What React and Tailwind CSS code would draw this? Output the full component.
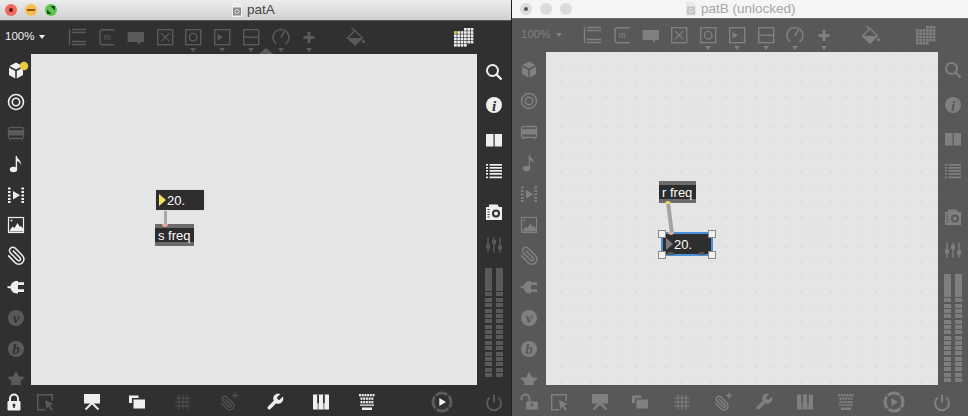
const rows = [0, 1, 2, 3, 4, 5]

function Svg({ children }) {
  return <svg width="20" height="20" viewBox="0 0 20 20" className="block shrink-0 overflow-visible">{children}</svg>
}

// toolbar icons
const ObjectIcon = () => (
  <Svg><path d="M2.5 2v16M5 2.5h14M5 5.5h14M5 14.5h14M5 17.5h14" fill="none" stroke="currentColor" strokeWidth="1.4" /></Svg>
)
const MessageIcon = () => (
  <Svg>
    <path d="M17.5 2.7H5a2 2 0 0 0-2 2v11a2 2 0 0 0 2 2h12.5" fill="none" stroke="currentColor" strokeWidth="1.4" />
    <text x="6.5" y="13" fontSize="10" fontStyle="italic" fontFamily="Liberation Serif, serif" fill="currentColor">m</text>
  </Svg>
)
const CommentIcon = () => (
  <Svg><path d="M2.6 5h16.4v10h-4v3l-3-3H2.6z" fill="currentColor" /></Svg>
)
const Boxed = ({ children }) => (
  <Svg>
    <rect x="2.7" y="2.7" width="15" height="15" fill="none" stroke="currentColor" strokeWidth="1.4" />
    {children}
  </Svg>
)
const ButtonIcon = () => (
  <Boxed><path d="M6 6l8.4 8.4M14.4 6L6 14.4" stroke="currentColor" strokeWidth="1.2" /></Boxed>
)
const ToggleIcon = () => (
  <Boxed><circle cx="10.2" cy="10.2" r="3.8" fill="none" stroke="currentColor" strokeWidth="1.4" /></Boxed>
)
const NumberIcon = () => (
  <Boxed><path d="M5.5 7l5.5 3.2-5.5 3.2z" fill="currentColor" /></Boxed>
)
const SliderIcon = () => (
  <Boxed><path d="M2.7 10.2h15" stroke="currentColor" strokeWidth="1.4" /></Boxed>
)
const DialIcon = () => (
  <Svg>
    <path d="M5.5 17a8 8 0 1 1 9 0" fill="none" stroke="currentColor" strokeWidth="1.5" />
    <path d="M10 10.5l3.5-6" stroke="currentColor" strokeWidth="1.5" />
  </Svg>
)
const PlusIcon = () => (
  <Svg><path d="M4.5 10.5h11M10 5v11" stroke="currentColor" strokeWidth="3" /></Svg>
)
const BucketIcon = () => (
  <Svg>
    <path d="M10 3.5l7.5 7.5L10 18 2.500 11z" fill="none" stroke="currentColor" strokeWidth="1.4" />
    <path d="M2.5 11h15L10 18z" fill="currentColor" />
    <path d="M6.5 1l3.5 3" stroke="currentColor" strokeWidth="1.4" />
    <circle cx="18.5" cy="14.5" r="1.6" fill="currentColor" />
  </Svg>
)
const MatrixIcon = ({ accent }) => (
  <Svg>
    {rows.map(r => rows.map(c => {
      if (r === 0 && c < 3) return null
      if (r === 5 && c > 3) return null
      const hot = accent && r === 1 && c === 0
      return <rect key={`${r}-${c}`} x={1 + c * 3.33} y={1 + r * 3.2} width="2.7" height="2.6" fill={hot ? accent : 'currentColor'} />
    }))}
  </Svg>
)

// side bar icons
const CubeIcon = ({ badge }) => (
  <Svg>
    <path d="M10 1.5l6.5 3.5L10 8.5 3.5 5z" fill="currentColor" />
    <path d="M3 6.5L9.2 10v7.5L3 14zM17 6.5L10.8 10v7.5L17 14z" fill="currentColor" />
    {badge && <circle cx="18" cy="5" r="4.3" fill="#e6cf3f" />}
  </Svg>
)
const TargetIcon = () => (
  <Svg>
    <circle cx="10" cy="10" r="7.5" fill="none" stroke="currentColor" strokeWidth="1.6" />
    <circle cx="10" cy="10" r="3.7" fill="none" stroke="currentColor" strokeWidth="1.6" />
  </Svg>
)
const PatcherIcon = () => (
  <Svg>
    <rect x="2.5" y="4.5" width="15" height="11" rx="1.5" fill="none" stroke="currentColor" strokeWidth="1.3" />
    <rect x="2.5" y="7" width="15" height="5.5" fill="currentColor" />
    <path d="M4 16v1.5M16 16v1.5" stroke="currentColor" strokeWidth="1.3" />
  </Svg>
)
const NoteIcon = () => (
  <Svg>
    <ellipse cx="7.5" cy="15.5" rx="3.7" ry="2.8" fill="currentColor" />
    <path d="M10.4 15V2" stroke="currentColor" strokeWidth="1.4" />
    <path d="M10.4 2c.6 3 5.1 4 4.6 9.5-.5-2.8-2-3.8-4.6-4.5z" fill="currentColor" />
  </Svg>
)
const FilmIcon = () => (
  <Svg>
    {[2.5, 6, 9.5, 13, 16].map(y => (
      <g key={y}>
        <rect x="2" y={y} width="2.6" height="2" fill="currentColor" />
        <rect x="15.4" y={y} width="2.6" height="2" fill="currentColor" />
      </g>
    ))}
    <path d="M7 6l7 4.2-7 4.2z" fill="currentColor" />
  </Svg>
)
const ImageIcon = () => (
  <Svg>
    <rect x="2.5" y="2.5" width="15" height="15" fill="none" stroke="currentColor" strokeWidth="1.2" />
    <path d="M3 16.5l3.5-5 2 1.5 3-5 2.5 4 1-1 2 2.5v3z" fill="currentColor" />
    <circle cx="5.5" cy="5.5" r="1" fill="currentColor" />
  </Svg>
)
const ClipIcon = () => (
  <Svg>
    <g transform="translate(20.5 -.5) scale(-.85 .85)">
      <path d="m16 6-8.414 8.586a2 2 0 0 0 2.829 2.829l8.414-8.586a4 4 0 1 0-5.657-5.657l-8.379 8.551a6 6 0 1 0 8.485 8.485l8.379-8.551" fill="none" stroke="currentColor" strokeWidth="1.8" />
    </g>
  </Svg>
)
const PlugIcon = () => (
  <Svg>
    <path d="M1.5 10.2h4" stroke="currentColor" strokeWidth="2" />
    <path d="M4.5 10.2c0-3.700 3-6.200 6-6.200h1.500v12.400h-1.500c-3 0-6-2.500-6-6.200z" fill="currentColor" />
    <path d="M12 5.3h6v2.800h-6zM12 12.300h6v2.800h-6z" fill="currentColor" />
  </Svg>
)
const LetterIcon = ({ cut, letter }) => (
  <Svg>
    <circle cx="10" cy="10" r="8" fill="currentColor" />
    <text x="10" y="14.5" textAnchor="middle" fontSize="15" fontStyle="italic" fontWeight="bold" fontFamily="Liberation Serif, serif" fill={cut}>{letter}</text>
  </Svg>
)
const VineIcon = ({ cut }) => <LetterIcon cut={cut} letter="v" />
const BeapIcon = ({ cut }) => <LetterIcon cut={cut} letter="b" />
const StarIcon = () => (
  <Svg><path d="M10 1.5l2.7 5.7 6.300.8-4.600 4.300 1.200 6.200L10 15.400l-5.600 3.100 1.200-6.200L1 8l6.300-.8z" fill="currentColor" /></Svg>
)
const SearchIcon = () => (
  <Svg>
    <circle cx="8.5" cy="8.5" r="5.500" fill="none" stroke="currentColor" strokeWidth="2" />
    <path d="M12.5 12.5l5 5" stroke="currentColor" strokeWidth="2.4" />
  </Svg>
)
const InfoIcon = ({ cut }) => (
  <Svg>
    <circle cx="10" cy="10" r="8" fill="currentColor" />
    <text x="10" y="15.5" textAnchor="middle" fontSize="15" fontStyle="italic" fontWeight="bold" fontFamily="Liberation Serif, serif" fill={cut}>i</text>
  </Svg>
)
const BookIcon = () => (
  <Svg><path d="M2 4h7.5v12.500H2zM10.700 4H18v12.500h-7.300z" fill="currentColor" /></Svg>
)
const ListIcon = () => (
  <Svg>
    {[3, 6, 9, 12, 15.5].map(y => (
      <g key={y}>
        <rect x="2" y={y} width="2" height="1.7" fill="currentColor" />
        <rect x="5.5" y={y} width="12.5" height="1.7" fill="currentColor" />
      </g>
    ))}
  </Svg>
)
const CameraIcon = ({ cut }) => (
  <Svg>
    <path d="M2 5h3V2.500h8.500L15 5h3v13H2z" fill="currentColor" />
    <circle cx="12" cy="11.5" r="4" fill={cut} />
    <circle cx="12" cy="11.5" r="2" fill="currentColor" />
    <path d="M3.5 7.5h2M3.5 10h2M3.5 12.5h2M3.5 15h2" stroke={cut} strokeWidth="1" />
  </Svg>
)
const MixerIcon = () => (
  <Svg>
    <path d="M4 2.5v15M10 2.500v15M16 2.500v15" stroke="currentColor" strokeWidth="1.4" />
    <path d="M2 9.5h4v4H2zM8 5h4v4H8zM14 10.500h4v4h-4z" fill="currentColor" />
  </Svg>
)

// bottom bar icons
const LockIcon = ({ cut }) => (
  <Svg>
    <path d="M6 9V6.500a4 4 0 0 1 8 0V9" fill="none" stroke="currentColor" strokeWidth="2" />
    <rect x="3.5" y="9" width="13" height="9.5" rx="1" fill="currentColor" />
    <circle cx="10" cy="13" r="1.5" fill={cut} />
    <rect x="9.3" y="13" width="1.4" height="3" fill={cut} />
  </Svg>
)
const UnlockIcon = ({ cut }) => (
  <Svg>
    <path d="M1.5 8V6.500a4 4 0 0 1 8 0V10" fill="none" stroke="currentColor" strokeWidth="1.8" />
    <rect x="6" y="9.5" width="12" height="8" rx="1" fill="currentColor" />
    <circle cx="12" cy="13" r="1.4" fill={cut} />
  </Svg>
)
const SelectIcon = () => (
  <Svg>
    <path d="M17.3 9V2.700H2.700v15H10" fill="none" stroke="currentColor" strokeWidth="1.5" />
    <path d="M10 8l8.500 4-3.600 1.400 3 4.100-1.500 1.200-3-4.200-2 2.700z" fill="currentColor" />
  </Svg>
)
const PresentIcon = () => (
  <Svg>
    <path d="M2 2h16v9.500H2z" fill="currentColor" />
    <path d="M10 11l-6.500 6.500M10 11l6.500 6.500" stroke="currentColor" strokeWidth="2" />
  </Svg>
)
const WindowsIcon = () => (
  <Svg><path d="M2 3.500h9.500v2.500H5v5H2zM6.500 7.500h11.500v9H6.500z" fill="currentColor" /></Svg>
)
const GridIcon = () => (
  <Svg><path d="M6 2.500v15M10 2.500v15M14 2.500v15M2.500 6h15M2.500 10h15M2.500 14h15" stroke="currentColor" strokeWidth="1" /></Svg>
)
const ClipPlusIcon = () => (
  <Svg>
    <g transform="translate(17 3) scale(-.68 .68)">
      <path d="m16 6-8.414 8.586a2 2 0 0 0 2.829 2.829l8.414-8.586a4 4 0 1 0-5.657-5.657l-8.379 8.551a6 6 0 1 0 8.485 8.485l8.379-8.551" fill="none" stroke="currentColor" strokeWidth="2.2" />
    </g>
    <path d="M13 3.500h6M16 .5v6" stroke="currentColor" strokeWidth="1.3" />
  </Svg>
)
const WrenchIcon = () => (
  <Svg>
    <g transform="scale(.83)">
      <path d="M14.7 6.3a1 1 0 0 0 0 1.4l1.6 1.6a1 1 0 0 0 1.4 0l3.77-3.77a6 6 0 0 1-7.94 7.94l-6.91 6.91a2.12 2.12 0 0 1-3-3l6.91-6.91a6 6 0 0 1 7.94-7.94l-3.76 3.76z" fill="currentColor" />
    </g>
  </Svg>
)
const PianoIcon = ({ cut }) => (
  <Svg>
    <rect x="2" y="2.5" width="16" height="15" fill="currentColor" />
    <path d="M6.2 2.500h1.800v9H6.200zM12 2.500h1.800v9H12z" fill={cut} />
    <path d="M7.1 11.500v6M12.900 11.500v6" stroke={cut} strokeWidth=".7" />
  </Svg>
)
const KeyboardIcon = () => (
  <Svg>
    {[[2, 6, 2], [5.5, 5, 3.5], [9, 5, 3.5]].map(([y, n, start]) =>
      Array.from({ length: n }, (_, i) => (
        <rect key={`${y}-${i}`} x={start + i * 2.7} y={y} width="2" height="2.3" fill="currentColor" />
      ))
    )}
    <path d="M3 12.500h14v1.200H3zM5 15.500h10v2.500H5z" fill="currentColor" />
  </Svg>
)
const PlayRingIcon = ({ mark }) => (
  <Svg>
    <circle cx="10" cy="10" r="9" fill="none" stroke="currentColor" strokeWidth="3" strokeDasharray="12.8 1.34" strokeDashoffset="7.1" />
    <path d="M7.3 6l6.700 4-6.700 4z" fill={mark} />
  </Svg>
)
const PowerIcon = () => (
  <Svg>
    <path d="M6 5.500a7 7 0 1 0 8 0" fill="none" stroke="currentColor" strokeWidth="2" />
    <path d="M10 2.500v8" stroke="currentColor" strokeWidth="2" />
  </Svg>
)

function Caret({ className }) {
  return <div className={`w-0 h-0 border-x-[3.5px] border-t-[4px] border-x-transparent ${className}`} />
}

function DocIcon({ dim }) {
  return (
    <svg width="12" height="14" viewBox="0 0 12 14" className="block shrink-0">
      <path d="M1 0h7.500L11 2.500V14H1z" fill={dim ? '#e9e9e9' : '#efefef'} />
      <rect x="2" y="4.5" width="8" height="8" fill={dim ? '#c2c2c2' : '#8c8c8c'} />
      <circle cx="6" cy="8.5" r="2" fill="none" stroke={dim ? '#e9e9e9' : '#dedede'} strokeWidth="1" />
    </svg>
  )
}

function Meter({ className, tone }) {
  return (
    <div className={`flex gap-[4px] ${className}`}>
      {[0, 1].map(col => (
        <div key={col} className="w-[7px] h-full flex flex-col justify-between">
          <div className={`h-[23px] ${tone}`} />
          {Array.from({ length: 16 }, (_, i) => (
            <div key={i} className={`h-[4px] ${tone}`} />
          ))}
        </div>
      ))}
    </div>
  )
}

function NumberBox({ mark, children }) {
  return (
    <>
      <div className={`w-0 h-0 border-y-[6px] border-y-transparent border-l-[7px] ${mark}`} />
      <span className="ml-[1px] text-[13px] text-white leading-none">{children}</span>
    </>
  )
}

function Named({ children, className }) {
  return (
    <div className={`absolute flex flex-col bg-[#6b6b6b] ${className}`}>
      <div className="my-[4px] flex-1 bg-[#2c2c2c] flex items-center pl-[3px] text-[13px] text-white leading-none">
        {children}
      </div>
    </div>
  )
}

function Handle({ className }) {
  return <div className={`absolute w-[8px] h-[8px] bg-[#f1f1f1] border border-[#8a8a8a] ${className}`} />
}

const B = 'text-[#efefef]'
const D = 'text-[#5a5a5a]'
const R = 'text-[#808080]'

export default function App() {
  return (
    <div className="w-[968px] h-[416px] flex bg-[#1e1e1e] overflow-hidden font-['Liberation_Sans',sans-serif]">
      {/* patA */}
      <div className="w-[511px] h-full flex flex-col bg-[#303030]">
        <div className="h-[20px] shrink-0 flex items-center bg-gradient-to-b from-[#ececec] to-[#d0d0d0]">
          <div className="flex items-center gap-[8px] pl-[5px]">
            <div className="w-[12px] h-[12px] rounded-full bg-[#ee6a5f] flex items-center justify-center">
              <div className="w-[4px] h-[4px] rounded-full bg-[#5a1410]" />
            </div>
            <div className="w-[12px] h-[12px] rounded-full bg-[#f5bd4f] flex items-center justify-center">
              <div className="w-[8px] h-[1.5px] bg-[#8a5a10]" />
            </div>
            <div className="w-[12px] h-[12px] rounded-full bg-[#61c454] flex items-center justify-center">
              <svg width="8" height="8" viewBox="0 0 8 8"><path d="M0 8V3.500L4.500 8zM8 0v4.500L3.500 0z" fill="#0f4d12" /></svg>
            </div>
          </div>
          <div className="ml-[174px] flex items-center gap-[4px]">
            <DocIcon />
            <span className="text-[13.5px] text-[#474747] leading-none">patA</span>
          </div>
        </div>
        <div className="h-px shrink-0 bg-[#555555]" />
        <div className="h-[33px] shrink-0 flex relative">
          <div className="w-[67px] shrink-0 flex items-center pl-[5px] pb-[1px] gap-[5px]">
            <span className="text-[11.5px] text-[#efefef] leading-none">100%</span>
            <Caret className="border-t-[#efefef]" />
          </div>
          {[
            { I: ObjectIcon, c: '' },
            { I: MessageIcon, c: 'ml-[10px]' },
            { I: CommentIcon, c: 'ml-[8px]' },
            { I: ButtonIcon, c: 'ml-[10px]' },
            { I: ToggleIcon, c: 'ml-[8px]', caret: true },
            { I: NumberIcon, c: 'ml-[9px]', caret: true },
            { I: SliderIcon, c: 'ml-[9px]', caret: true },
            { I: DialIcon, c: 'ml-[10px]', caret: true },
            { I: PlusIcon, c: 'ml-[8px]', caret: true },
            { I: BucketIcon, c: 'ml-[26px]' },
          ].map(({ I, c, caret }, i) => (
            <div key={i} className={`w-[20px] pt-[6px] flex flex-col items-center ${D} ${c}`}>
              <I />
              {caret && <Caret className="mt-[1px] border-t-[#5a5a5a]" />}
            </div>
          ))}
          <div className={`ml-[88px] w-[20px] pt-[6px] ${B}`}><MatrixIcon accent="#e6cf3f" /></div>
          <div className="absolute left-[259px] bottom-0 w-0 h-0 border-x-[7px] border-x-transparent border-b-[6px] border-b-[#5a5a5a]" />
        </div>
        <div className="flex-1 flex min-h-0">
          <div className="w-[31px] shrink-0 pt-[2px] flex flex-col items-center overflow-hidden">
            {[
              [() => <CubeIcon badge />, B],
              [TargetIcon, B],
              [PatcherIcon, D],
              [NoteIcon, B],
              [FilmIcon, B],
              [ImageIcon, B],
              [ClipIcon, B],
              [PlugIcon, B],
              [VineIcon, D],
              [BeapIcon, D],
              [StarIcon, D],
            ].map(([I, tone], i) => (
              <div key={i} className={`h-[30.8px] shrink-0 flex items-center ${tone}`}><I cut="#303030" /></div>
            ))}
          </div>
          <div className="w-[446px] shrink-0 bg-[#e5e5e5] relative">
            <div className="absolute left-[124px] top-[135px] w-[50px] h-[22px] bg-[#2e2e2e] border border-[#dcdcdc] flex items-center pl-[3px]">
              <NumberBox mark="border-l-[#f3e35a]">20.</NumberBox>
            </div>
            <div className="absolute left-[133px] top-[157px] w-[3px] h-[13px] bg-[#a8a8a8]" />
            <Named className="left-[124px] top-[170px] w-[39px] h-[22px]">s freq</Named>
            <div className="absolute left-[131px] top-[170px] w-[6px] h-[3px] rounded-b-full bg-[#e3a99a]" />
          </div>
          <div className="w-[34px] shrink-0 flex flex-col items-center">
            {[
              [SearchIcon, B, 'mt-[8px]'],
              [InfoIcon, B, 'mt-[13px]'],
              [BookIcon, B, 'mt-[15px]'],
              [ListIcon, B, 'mt-[11px]'],
              [CameraIcon, B, 'mt-[21px]'],
              [MixerIcon, D, 'mt-[13px]'],
            ].map(([I, tone, m], i) => (
              <div key={i} className={`${tone} ${m}`}><I cut="#303030" /></div>
            ))}
            <Meter className="mt-[13px] h-[109px]" tone="bg-[#5a5a5a]" />
          </div>
        </div>
        <div className="h-[31px] shrink-0 flex items-center pt-[3px]">
          {[
            [LockIcon, B, 'ml-[4px]'],
            [SelectIcon, D, 'ml-[11px]'],
            [PresentIcon, B, 'ml-[27px]'],
            [WindowsIcon, B, 'ml-[25px]'],
            [GridIcon, 'text-[#505050]', 'ml-[26px]'],
            [ClipPlusIcon, 'text-[#505050]', 'ml-[26px]'],
            [WrenchIcon, B, 'ml-[26px]'],
            [PianoIcon, B, 'ml-[26px]'],
            [KeyboardIcon, B, 'ml-[26px]'],
            [PlayRingIcon, D, 'ml-[55px]'],
            [PowerIcon, D, 'ml-[32px]'],
          ].map(([I, tone, m], i) => (
            <div key={i} className={`${tone} ${m}`}><I cut="#303030" mark="#f2f2f2" /></div>
          ))}
        </div>
      </div>

      <div className="w-px h-full shrink-0 bg-[#1e1e1e]" />

      {/* patB (unlocked) */}
      <div className="flex-1 h-full flex flex-col bg-[#585858]">
        <div className="h-[18px] shrink-0 flex items-center bg-[#f5f5f5]">
          <div className="flex items-center gap-[8px] pl-[8px]">
            <div className="w-[12px] h-[12px] rounded-full bg-[#dcdcdc] flex items-center justify-center">
              <div className="w-[4px] h-[4px] rounded-full bg-[#555555]" />
            </div>
            <div className="w-[12px] h-[12px] rounded-full bg-[#dcdcdc]" />
            <div className="w-[12px] h-[12px] rounded-full bg-[#dcdcdc]" />
          </div>
          <div className="ml-[113px] flex items-center gap-[4px]">
            <DocIcon dim />
            <span className="text-[13.5px] text-[#a6a6a6] leading-none">patB (unlocked)</span>
          </div>
        </div>
        <div className="h-px shrink-0 bg-[#6e6e6e]" />
        <div className="h-[33px] shrink-0 flex">
          <div className="w-[70px] shrink-0 flex items-center pl-[9px] pb-[1px] gap-[6px]">
            <span className="text-[11.5px] text-[#808080] leading-none">100%</span>
            <Caret className="border-t-[#808080]" />
          </div>
          {[
            { I: ObjectIcon, c: '' },
            { I: MessageIcon, c: 'ml-[10px]' },
            { I: CommentIcon, c: 'ml-[8px]' },
            { I: ButtonIcon, c: 'ml-[9px]' },
            { I: ToggleIcon, c: 'ml-[9px]', caret: true },
            { I: NumberIcon, c: 'ml-[9px]', caret: true },
            { I: SliderIcon, c: 'ml-[9px]', caret: true },
            { I: DialIcon, c: 'ml-[9px]', caret: true },
            { I: PlusIcon, c: 'ml-[9px]', caret: true },
            { I: BucketIcon, c: 'ml-[26px]' },
          ].map(({ I, c, caret }, i) => (
            <div key={i} className={`w-[20px] pt-[6px] flex flex-col items-center ${R} ${c}`}>
              <I />
              {caret && <Caret className="mt-[1px] border-t-[#808080]" />}
            </div>
          ))}
          <div className={`ml-[35px] w-[20px] pt-[6px] ${R}`}><MatrixIcon /></div>
        </div>
        <div className="flex-1 flex min-h-0">
          <div className="w-[34px] shrink-0 pt-[2px] flex flex-col items-center overflow-hidden">
            {[CubeIcon, TargetIcon, PatcherIcon, NoteIcon, FilmIcon, ImageIcon, ClipIcon, PlugIcon, VineIcon, BeapIcon, StarIcon].map((I, i) => (
              <div key={i} className={`h-[31px] shrink-0 flex items-center ${R}`}><I cut="#585858" /></div>
            ))}
          </div>
          <div className="w-[392px] shrink-0 relative bg-[#e5e5e5] bg-[radial-gradient(circle,#bdbdbd_0.6px,transparent_1px)] bg-[length:15px_15px] bg-[position:-7.5px_-7.5px]">
            <svg width="40" height="50" viewBox="0 0 40 50" className="absolute left-[115px] top-[145px]">
              <path d="M7 5L11 37" stroke="#a3a3a3" strokeWidth="4" />
            </svg>
            <Named className="left-[113px] top-[129px] w-[37px] h-[22px]">r freq</Named>
            <div className="absolute left-[119px] top-[149px] w-[6px] h-[3px] rounded-t-full bg-[#e6d75a]" />
            <div className="absolute left-[115px] top-[180px] w-[52px] h-[24px] bg-[#2e2e2e] border-2 border-[#4a90d9] flex items-center pl-[3px]">
              <NumberBox mark="border-l-[#7a7a7a]">20.</NumberBox>
            </div>
            <div className="absolute left-[122px] top-[180px] w-[6px] h-[3px] rounded-b-full bg-[#e3a99a]" />
            <div className="absolute left-[121px] top-[200px] w-[7px] h-[3px] rounded-t-full bg-[#5c5c5c]" />
            <div className="absolute left-[152px] top-[200px] w-[7px] h-[3px] rounded-t-full bg-[#5c5c5c]" />
            <Handle className="left-[112px] top-[178px]" />
            <Handle className="left-[162px] top-[178px]" />
            <Handle className="left-[112px] top-[199px]" />
            <Handle className="left-[162px] top-[199px]" />
          </div>
          <div className="w-[30px] shrink-0 flex flex-col items-center">
            {[
              [SearchIcon, 'mt-[8px]'],
              [InfoIcon, 'mt-[15px]'],
              [BookIcon, 'mt-[14px]'],
              [ListIcon, 'mt-[12px]'],
              [CameraIcon, 'mt-[26px]'],
              [MixerIcon, 'mt-[13px]'],
            ].map(([I, m], i) => (
              <div key={i} className={`${R} ${m}`}><I cut="#585858" /></div>
            ))}
            <Meter className="mt-[14px] h-[108px]" tone="bg-[#7e7e7e]" />
          </div>
        </div>
        <div className="h-[31px] shrink-0 flex items-center pt-[3px]">
          {[
            [UnlockIcon, 'ml-[8px]'],
            [SelectIcon, 'ml-[9px]'],
            [PresentIcon, 'ml-[21px]'],
            [WindowsIcon, 'ml-[20px]'],
            [GridIcon, 'ml-[22px]'],
            [ClipPlusIcon, 'ml-[21px]'],
            [WrenchIcon, 'ml-[21px]'],
            [PianoIcon, 'ml-[21px]'],
            [KeyboardIcon, 'ml-[21px]'],
            [PlayRingIcon, 'ml-[28px]'],
            [PowerIcon, 'ml-[28px]'],
          ].map(([I, m], i) => (
            <div key={i} className={`${R} ${m}`}><I cut="#585858" mark="#808080" /></div>
          ))}
        </div>
      </div>
    </div>
  )
}
